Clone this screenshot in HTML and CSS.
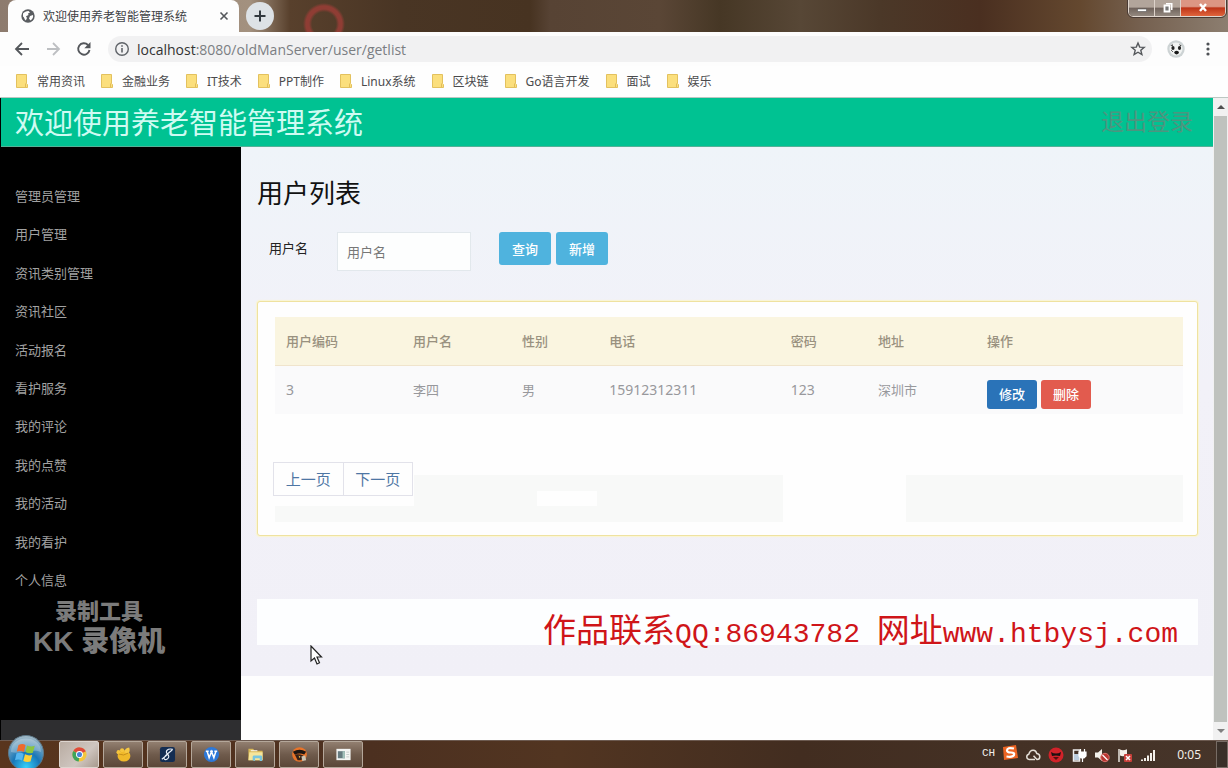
FILE: index.html
```html
<!DOCTYPE html>
<html lang="zh-CN">
<head>
<meta charset="utf-8">
<title>欢迎使用养老智能管理系统</title>
<link rel="stylesheet" href="styles.css">
</head>
<body>
<svg class="defs" aria-hidden="true">
  <symbol id="folder" viewBox="0 0 12 14"><path d="M.5.5h10v9l1 1v3H.5z" fill="#fbdf7d" stroke="#e3c15e"/><path d="M9.500 13V9.500" stroke="#e3bd57" fill="none"/></symbol>
</svg>
<div class="desktop">
  <div class="window">
    <header class="titlebar">
      <div class="tab">
        <svg class="globe" viewBox="0 0 14 14"><circle cx="7" cy="7" r="6.700" fill="#5a5d61"/><path d="M2 4.500C3.500 3 5 2 7.500 2L9 3.500 7 4.500 7.500 6 5 7.200 6 9 4.800 11.500C3 10 3.500 8.500 2 7.500zM9 7l3-1c.5 2-.3 4-2.500 5.500L8 9.500z" fill="#fff"/></svg>
        <span class="tab-title">欢迎使用养老智能管理系统</span>
        <button class="tab-close" aria-label="关闭标签页"><svg viewBox="0 0 10 10"><path d="M1.500 1.500l7 7m0-7l-7 7" stroke="#55585c" stroke-width="1.600"/></svg></button>
      </div>
      <button class="new-tab" aria-label="新标签页"><svg viewBox="0 0 14 14"><path d="M7 1.500v11M1.500 7h11" stroke="#333a40" stroke-width="2"/></svg></button>
      <div class="controls">
        <button aria-label="最小化"><svg viewBox="0 0 16 16"><path d="M3.500 9h9v2.500h-9z" fill="#fff" stroke="#555" stroke-width=".6"/></svg></button>
        <button aria-label="还原"><svg viewBox="0 0 16 16"><path d="M6 3h6.500v7H11V4.500H6z" fill="#fff"/><path d="M4.500 5.500h5v6h-5z" fill="#777" stroke="#fff" stroke-width="1.800"/></svg></button>
        <button class="close" aria-label="关闭"><svg viewBox="0 0 16 16"><path d="M5 4l6 7M11 4l-6 7" stroke="#fff" stroke-width="2.400"/></svg></button>
      </div>
    </header>
    <div class="toolbar">
      <button aria-label="后退"><svg viewBox="0 0 16 16"><path d="M15 8H2M8 2L2 8l6 6" fill="none" stroke="#54575b" stroke-width="1.800"/></svg></button>
      <button aria-label="前进"><svg viewBox="0 0 16 16"><path d="M2 8h12M8 2l6 6-6 6" fill="none" stroke="#bdbfc2" stroke-width="1.800"/></svg></button>
      <button aria-label="刷新"><svg viewBox="0 0 16 16"><path d="M13.500 9A5.700 5.700 0 1 1 12 4" fill="none" stroke="#54575b" stroke-width="1.900"/><path d="M14.500 1v6.200H8.300z" fill="#54575b"/></svg></button>
      <div class="address">
        <svg viewBox="0 0 16 16"><circle cx="8" cy="8" r="6.300" fill="none" stroke="#5f6368" stroke-width="1.400"/><path d="M8 7v4.500M8 4.300v1.500" stroke="#5f6368" stroke-width="1.600"/></svg>
        <span class="url"><b>localhost</b>:8080/oldManServer/user/getlist</span>
        <button aria-label="收藏"><svg viewBox="0 0 16 16"><path d="M8 2l1.700 4.100 4.500.3-3.400 2.900 1.100 4.300L8 11.200l-3.900 2.400 1.100-4.300L1.800 6.400l4.500-.3z" fill="none" stroke="#54575b" stroke-width="1.400"/></svg></button>
      </div>
      <button class="avatar" aria-label="用户"><svg viewBox="0 0 18 18"><circle cx="9" cy="9" r="8.700" fill="#cdd3d4"/><circle cx="9" cy="9" r="6.500" fill="#f1f3f2"/><path d="M3.500 6l2-2 .5 2zM12 4l2.500 1.500-1 1z" fill="#444"/><ellipse cx="6" cy="8" rx="1.600" ry="1.900" fill="#222"/><ellipse cx="12.500" cy="8" rx="1.600" ry="1.900" fill="#222"/><ellipse cx="9.600" cy="12.600" rx="2.300" ry="1.800" fill="#181818"/><path d="M4 10l2 2" stroke="#666"/></svg></button>
      <button aria-label="菜单"><svg viewBox="0 0 16 16"><g fill="#4e5155"><circle cx="8" cy="3" r="1.600"/><circle cx="8" cy="8" r="1.600"/><circle cx="8" cy="13" r="1.600"/></g></svg></button>
    </div>
    <nav class="bookmarks" aria-label="书签">
      <a href="#"><svg><use href="#folder"/></svg>常用资讯</a>
      <a href="#"><svg><use href="#folder"/></svg>金融业务</a>
      <a href="#"><svg><use href="#folder"/></svg>IT技术</a>
      <a href="#"><svg><use href="#folder"/></svg>PPT制作</a>
      <a href="#"><svg><use href="#folder"/></svg>Linux系统</a>
      <a href="#"><svg><use href="#folder"/></svg>区块链</a>
      <a href="#"><svg><use href="#folder"/></svg>Go语言开发</a>
      <a href="#"><svg><use href="#folder"/></svg>面试</a>
      <a href="#"><svg><use href="#folder"/></svg>娱乐</a>
    </nav>
    <div class="viewport">
      <div class="page">
        <header class="banner">
          <span class="brand">欢迎使用养老智能管理系统</span>
          <a class="logout" href="#">退出登录</a>
        </header>
        <div class="columns">
          <aside class="sidebar">
            <ul class="menu">
              <li><a href="#">管理员管理</a></li>
              <li><a href="#">用户管理</a></li>
              <li><a href="#">资讯类别管理</a></li>
              <li><a href="#">资讯社区</a></li>
              <li><a href="#">活动报名</a></li>
              <li><a href="#">看护服务</a></li>
              <li><a href="#">我的评论</a></li>
              <li><a href="#">我的点赞</a></li>
              <li><a href="#">我的活动</a></li>
              <li><a href="#">我的看护</a></li>
              <li><a href="#">个人信息</a></li>
            </ul>
            <div class="status"></div>
            <div class="recorder"><span>录制工具</span><strong>KK 录像机</strong></div>
          </aside>
          <div class="main">
            <main class="content">
              <h1>用户列表</h1>
              <form class="search">
                <label for="username">用户名</label>
                <input id="username" type="text" placeholder="用户名">
                <button type="button">查询</button>
                <button type="button">新增</button>
              </form>
              <section class="panel">
                <table>
                  <colgroup><col class="c-id"><col class="c-name"><col class="c-sex"><col class="c-phone"><col class="c-pass"><col class="c-addr"><col></colgroup>
                  <thead><tr><th>用户编码</th><th>用户名</th><th>性别</th><th>电话</th><th>密码</th><th>地址</th><th>操作</th></tr></thead>
                  <tbody><tr><td class="num">3</td><td>李四</td><td>男</td><td class="num">15912312311</td><td class="num">123</td><td>深圳市</td><td class="actions"><button class="edit">修改</button><button class="delete">删除</button></td></tr></tbody>
                </table>
                <div class="panel-foot">
                  <nav class="pager" aria-label="分页"><a href="#">上一页</a><a href="#">下一页</a></nav>
                </div>
              </section>
              <div class="footer-bar"></div>
            </main>
          </div>
        </div>
      </div>
      <div class="scrollbar" aria-hidden="true"><i class="up"></i><i class="thumb"></i><i class="down"></i></div>
    </div>
  </div>
  <footer class="taskbar">
    <button class="start" aria-label="开始"><svg viewBox="0 0 36 36"><defs><radialGradient id="orb" cx=".5" cy=".9" r=".9"><stop offset="0" stop-color="#35d0fa"/><stop offset=".45" stop-color="#1877b8"/><stop offset="1" stop-color="#a9bdc7"/></radialGradient></defs><circle cx="18" cy="18" r="17.500" fill="url(#orb)" stroke="#5e7a8b"/><path d="M3 17C3 -1 33 -1 33 17 24 13 12 20 3 17z" fill="#fff" opacity=".25"/><path d="M10.500 10q4-2 7 0l-1.500 7q-3.500-2-7.200-.4z" fill="#ee6a2e"/><path d="M19 10.500q4 2 7.800.3l-2 7q-3.800 1.400-7.300-.7z" fill="#8cc63f"/><path d="M8.500 18.300q3.700-1.500 7.200.4l-1.700 6.800q-3.300-1.700-7-.4z" fill="#56b6ef"/><path d="M17 19.300q3.500 2 7.300.5l-1.800 6.800q-3.800 1.200-7.200-.7z" fill="#fdd038"/></svg></button>
    <div class="apps">
      <button class="active" aria-label="Chrome"><svg viewBox="0 0 18 18"><circle cx="9" cy="9" r="7.500" fill="#f3c63c"/><path d="M9 9L2.500 5.200A7.500 7.500 0 0 1 15.700 5.600z" fill="#df4a3b"/><path d="M9 9L8.200 16.500A7.500 7.500 0 0 1 2.500 5.200z" fill="#3fa45b"/><circle cx="9" cy="9" r="3.700" fill="#fff"/><circle cx="9" cy="9" r="2.700" fill="#4a86d4"/></svg></button>
      <button aria-label="应用"><svg viewBox="0 0 18 18"><ellipse cx="9.500" cy="10.500" rx="6.800" ry="6" fill="#f0b92a"/><circle cx="3.800" cy="6.500" r="2.200" fill="#f6c53c"/><circle cx="7.500" cy="4.500" r="2.200" fill="#f6c53c"/><path d="M10 7q0-5 5-5.500 1.500 4-1 6.500z" fill="#f5c846"/><path d="M4 8.500q5 2.500 10-1" stroke="#c48c1a" fill="none"/></svg></button>
      <button aria-label="编辑器"><svg viewBox="0 0 18 18"><rect x="1" y="1" width="16" height="16" rx="2.500" fill="#142d52"/><path d="M14.500 3.500C9 2 6 6 9 8.500c4 3.500-2 8-3.500 5C4.500 11 10 8 14.500 3.500M3 14l6-5" stroke="#e8eef6" stroke-width="1.200" fill="none"/></svg></button>
      <button aria-label="WPS"><svg viewBox="0 0 18 18"><circle cx="9" cy="9" r="8" fill="#2d78d8"/><path d="M3 5.500h3M7.500 5.500h3M12 5.500h3M4.500 6l2 6.500L9 6l2.500 6.500 2-6.500" fill="none" stroke="#fff" stroke-width="1.600"/></svg></button>
      <button aria-label="资源管理器"><svg viewBox="0 0 18 18"><path d="M1.500 3h5l1.500 2h8.500v10h-15z" fill="#d9b957"/><path d="M2.500 6.500h14V15h-15z" fill="#f6e59a"/><path d="M6 15v-3.500q0-1.500 1.500-1.500h7q1.500 0 1.500 1.500V16h-2.500v-3h-5v3z" fill="#78c5de"/><path d="M4 5h7" stroke="#fff"/></svg></button>
      <button aria-label="录像机"><svg viewBox="0 0 18 18"><circle cx="9" cy="9" r="7.800" fill="#e8742a"/><path d="M2 6q7-4 14 0l-2 3q-5-2-10 0z" fill="#1b1512"/><path d="M4 9q5-1 9 1l-2 5H7z" fill="#352018"/><path d="M8 10l2 1-1 2z" fill="#f4b63b"/><path d="M11 11l4-1 1 5-4 1z" fill="#c9c4b4"/></svg></button>
      <button aria-label="窗口"><svg viewBox="0 0 18 18"><rect x="1.500" y="3" width="15" height="12" fill="#f4f5f4"/><path d="M3 5.500h7.500V13H3z" fill="#667b80"/><path d="M8 5.500h2.500V13H8z" fill="#a3c1bb"/><path d="M12 6.500h3M12 9h3M12 11.500h3" stroke="#c3cac8"/></svg></button>
    </div>
    <div class="tray">
      <span class="lang">CH</span>
      <svg viewBox="0 0 16 16"><path d="M1 2l13-2 2 13-14 2z" fill="#ed6423"/><path d="M12 3.500Q5 2 5 5.500q0 2 4 2t3 2.500q-1 2.500-7.500 1.500" fill="none" stroke="#fff" stroke-width="2.200"/></svg>
      <svg class="low" viewBox="0 0 16 16"><path d="M10 12.500H4.200a2.700 2.700 0 0 1-.4-5.300Q5 3 8.300 3.200 11 3.400 11.800 6.500q3 .5 3 3.200 0 2.800-2.800 2.800L8.500 8.700" fill="none" stroke="#e4dfd7" stroke-width="1.500"/></svg>
      <svg class="low" viewBox="0 0 16 16"><circle cx="8" cy="8" r="7.500" fill="#d12229"/><path d="M3 5q5 3 10 0l-1 4q-4-1-8 0z" fill="#1b1010"/><path d="M5 10h6l-3 3z" fill="#54100f"/></svg>
      <svg class="low" viewBox="0 0 16 16"><path d="M2.500 3h6v11h-6z" fill="none" stroke="#eee" stroke-width="1.500"/><path d="M3 7h5v6H3z" fill="#bcd"/><path d="M8 5h7v4l-2 2h-3L8 9zM9.500 2v3M13.500 2v3M11.500 11v4" fill="#fff" stroke="#fff" stroke-width="1.200"/></svg>
      <svg class="low" viewBox="0 0 16 16"><path d="M1 5.500h3L8 2v12l-4-3.500H1z" fill="#f4f1eb"/><circle cx="11" cy="10.500" r="4.200" fill="#b93632" stroke="#df7069"/><path d="M8.500 8l5 5" stroke="#fff" stroke-width="1.300"/></svg>
      <svg class="low" viewBox="0 0 16 16"><path d="M2 2v13" stroke="#f4f1eb" stroke-width="1.400"/><path d="M3 2.500q3 1.500 7-.3v6q-4 1.800-7 .3z" fill="#f4f1eb"/><rect x="7" y="7" width="8" height="8" rx="1" fill="#c8403a"/><path d="M9 9l4 4m0-4l-4 4" stroke="#fff" stroke-width="1.500"/></svg>
      <svg class="low" viewBox="0 0 16 16"><path d="M1 12.500h2V14H1zM4 11h2v3H4zM7 8.500h2V14H7zM10 6h2v8h-2zM13 3h2v11h-2z" fill="#f4f1eb"/></svg>
      <time>0:05</time>
      <i class="peek"></i>
    </div>
  </footer>
  <p class="credit"><span>作品联系</span>QQ:86943782 <span>网址</span>www.htbysj.com</p>
  <svg class="cursor" viewBox="0 0 13 20" aria-hidden="true"><path d="M1 1v15l3.500-3 2.500 6 2.500-1.200L7 12h4.500z" fill="#fff" stroke="#222" stroke-width="1.200"/></svg>
</div>
</body>
</html>
```
FILE: styles.css
```css
* { box-sizing: border-box; }
body {
  margin: 0;
  font-family: "Noto Sans", "Noto Sans CJK SC", sans-serif;
  font-size: 13px;
}
button { padding: 0; border: 0; background: none; font: inherit; }
a { color: inherit; text-decoration: none; }
svg { display: block; flex: none; width: 16px; height: 16px; }
.defs { position: absolute; width: 0; height: 0; }
.desktop {
  position: relative;
  display: flex;
  flex-direction: column;
  height: 100vh;
  overflow: hidden;
  background: #47342a;
}
.window { flex: 1; display: flex; flex-direction: column; min-height: 0; }

/* Browser chrome */
.titlebar {
  display: flex;
  align-items: flex-start;
  height: 32px;
  padding-left: 8px;
  background:
    radial-gradient(circle at 324px 24px, transparent 12px, #8f3d34 15px, #8f3d34 18px, transparent 21px),
    linear-gradient(90deg, #8d7b6e 0, #a3917f 250px, #58402c 290px, #493524 400px, #473321 530px, #574334 550px, #5a4636 660px, #463725 720px, #574736 800px, #4b3828 880px, #4a2f20 980px, #64482f 1080px, #75604f 1140px, #8c7e70 100%);
}
.tab {
  display: flex;
  align-items: center;
  width: 231px;
  height: 32px;
  padding: 0 10px 0 13px;
  border-radius: 8px 8px 0 0;
  background: #fdfdfd;
}
.globe { width: 14px; height: 14px; }
.tab-title { flex: 1; padding-left: 8px; color: #3f4246; font-size: 12px; white-space: nowrap; }
.tab-close svg { width: 10px; height: 10px; }
.new-tab {
  display: grid;
  place-items: center;
  width: 28px;
  height: 28px;
  margin: 2px 0 0 7px;
  border-radius: 50%;
  background: #dde2e6;
}
.new-tab svg { width: 14px; height: 14px; }
.controls {
  display: flex;
  margin-left: auto;
  margin-right: 2px;
  border: 1px solid #e0d6ce;
  border-top: 0;
  border-radius: 0 0 5px 5px;
  outline: 1px solid #4a3b34;
  overflow: hidden;
}
.controls button {
  display: grid;
  place-items: center;
  width: 26px;
  height: 16px;
  border-right: 1px solid #ddd2ca;
  background: linear-gradient(#b2a59b 0 45%, #6f625b 50%, #948980);
}
.controls .close { width: 44px; border: 0; background: linear-gradient(#dc9683 0 40%, #bd3518 50%, #e0643c); }
.toolbar {
  display: flex;
  align-items: center;
  gap: 15px;
  height: 34px;
  padding: 0 12px 0 14px;
  background: #fdfdfd;
}
.address {
  flex: 1;
  display: flex;
  align-items: center;
  gap: 7px;
  height: 26px;
  margin-left: 1px;
  padding: 0 6px;
  border-radius: 13px;
  background: #f1f1f2;
}
.url { flex: 1; color: #7b7e82; font-family: "Open Sans", sans-serif; font-size: 14px; }
.url b { color: #333; font-weight: 400; }
.avatar svg { width: 18px; height: 18px; }
.bookmarks {
  display: flex;
  align-items: center;
  gap: 16px;
  height: 32px;
  padding: 0 16px 2px;
  border-bottom: 1px solid #bcc7c2;
  background: #fefefe;
  color: #4a4a4c;
  font-size: 12px;
  white-space: nowrap;
}
.bookmarks a { display: flex; align-items: center; gap: 9px; }
.bookmarks svg { width: 12px; height: 14px; }

/* Page */
.viewport { flex: 1; display: flex; min-height: 0; border-left: 1px solid #000; }
.page { flex: 1; display: flex; flex-direction: column; min-width: 0; }
.banner {
  display: flex;
  justify-content: space-between;
  align-items: center;
  height: 49px;
  padding: 0 20px 0 14px;
  border-bottom: 1px solid #53b297;
  background: #00c292;
}
.brand { padding-top: 2px; color: #cffbf2; font-size: 29px; line-height: 46px; }
.logout { padding-bottom: 4px; color: #4d957f; font-size: 23px; }
.columns { flex: 1; display: flex; min-height: 0; }
.sidebar {
  position: relative;
  display: flex;
  flex-direction: column;
  flex: none;
  width: 240px;
  background: #000;
}
.menu {
  flex: 1;
  display: flex;
  flex-direction: column;
  justify-content: space-between;
  margin: 0;
  padding: 39px 14px 130px;
  color: #a2a2a2;
  line-height: 20px;
  list-style: none;
}
.status { height: 20px; background: #2e2e30; }
.recorder {
  position: absolute;
  top: 450px;
  left: 32px;
  display: flex;
  flex-direction: column;
  align-items: center;
  color: #7b7b7b;
  font-family: "Liberation Sans", "Noto Sans CJK SC", sans-serif;
  font-size: 22px;
  font-weight: 900;
  line-height: 30px;
  white-space: nowrap;
}
.recorder strong { font-size: 28px; font-weight: 900; }
.main { flex: 1; min-width: 0; background: #fefefe; }
.content { padding: 26px 15px 31px 16px; background: linear-gradient(#eff4f9, #f2f1f8 45%, #f1f0f7); }
h1 { margin: 0; color: #111; font-size: 26px; font-weight: 400; line-height: 40px; }
.search { display: flex; align-items: flex-start; margin: 19px 0 30px; padding-left: 12px; }
.search label { width: 68px; color: #222; line-height: 32px; }
.search input {
  width: 134px;
  height: 39px;
  margin-right: 28px;
  padding: 0 9px;
  border: 1px solid #e2e8ec;
  background: #fdfefe;
  font: inherit;
}
.search input::placeholder { color: #777; opacity: 1; }
.search button {
  width: 52px;
  height: 33px;
  margin-right: 5px;
  border-radius: 3px;
  background: #4fb3de;
  color: #fff;
  font-weight: 500;
}
.panel {
  padding: 15px 14px 13px 17px;
  border: 1px solid #efe2a0;
  border-radius: 3px;
  background: #fefefe;
  box-shadow: 0 0 1px 1px #faf5d2;
}
table { width: 100%; table-layout: fixed; border-collapse: collapse; text-align: left; }
.c-id { width: 14%; }
.c-name { width: 12%; }
.c-sex { width: 9.600%; }
.c-phone { width: 20%; }
.c-pass { width: 9.600%; }
.c-addr { width: 12%; }
th { height: 48px; padding: 0 11px; border-bottom: 1px solid #f0e4cc; background: #faf5e0; color: #99917f; font-weight: 500; }
td { height: 49px; padding: 14px 11px 0; background: #fafafb; color: #98989c; line-height: 20px; vertical-align: top; }
.num { font-size: 14px; }
.actions { white-space: nowrap; }
.actions button { width: 50px; height: 29px; margin-right: 4px; border-radius: 3px; color: #fff; font-weight: 500; }
.edit { background: #2a73b8; }
.delete { background: #e25b4e; }
.panel-foot {
  height: 60px;
  margin-top: 48px;
  background:
    linear-gradient(#fefefe, #fefefe) 262px 29px / 60px 15px no-repeat,
    linear-gradient(#fefefe, #fefefe) 0 0 / 139px 44px no-repeat,
    linear-gradient(90deg, #f8f9f8 0 56%, #fefefe 56% 69.500%, #f8f9f8 69.500%) 0 13px / 100% 47px no-repeat;
}
.pager { display: flex; width: 140px; margin-left: -2px; border: 1px solid #e2e2ea; background: #fefefe; }
.pager a { flex: 1; color: #4e76a4; font-size: 15px; line-height: 32px; text-align: center; }
.pager a + a { border-left: 1px solid #e2e2ea; }
.footer-bar { height: 46px; margin-top: 63px; background: #fdfeff; }
.scrollbar { display: flex; flex-direction: column; align-items: center; width: 15px; background: #f1f1f1; }
.up, .down { margin: 7px 0; border: 4px solid transparent; }
.up { border-top: 0; border-bottom: 4px solid #505050; }
.down { border-bottom: 0; border-top: 4px solid #808080; }
.thumb { flex: 1; width: 13px; background: #bfc2be; }

/* Taskbar */
.taskbar {
  display: flex;
  align-items: center;
  height: 28px;
  padding-left: 8px;
  border-top: 1px solid #6c5a50;
  background: linear-gradient(90deg, #59351d, #4c3020 370px, #523521 560px, #422d20 800px, #46352a);
}
.start { position: relative; z-index: 1; }
.start svg { width: 36px; height: 36px; margin-top: -4px; }
.apps { display: flex; gap: 4px; margin-left: 15px; }
.apps button {
  display: grid;
  place-items: center;
  width: 40px;
  height: 27px;
  border: 1px solid #b4a79a;
  border-radius: 2px;
  background: linear-gradient(#927f70, #6f5b4c 50%, #5b4738);
}
.apps .active { background: linear-gradient(135deg, #b9aca2, #cfc6c0 60%, #a89a8e); border-color: #ddd5cf; }
.apps svg { width: 17px; height: 17px; }
.tray { display: flex; align-items: center; gap: 7px; margin-left: auto; color: #f2eee8; }
.lang { padding-bottom: 4px; font-family: "Liberation Mono", monospace; font-size: 11px; }
.tray svg { margin-bottom: 4px; }
.tray .low { margin: 1px 0 0; }
.tray time { margin-left: 14px; font-size: 12px; }
.peek { width: 12px; height: 27px; margin-left: 8px; border: 1px solid #776c65; background: #3a3029; }

/* Overlays */
.credit {
  position: absolute;
  right: 50px;
  bottom: 109px;
  margin: 0;
  color: #cf1519;
  font-family: "Liberation Mono", "Noto Sans CJK SC", monospace;
  font-size: 28px;
  line-height: 48px;
  white-space: nowrap;
}
.credit span { font-size: 33px; }
.cursor { position: absolute; top: 645px; left: 310px; width: 13px; height: 20px; }
```
